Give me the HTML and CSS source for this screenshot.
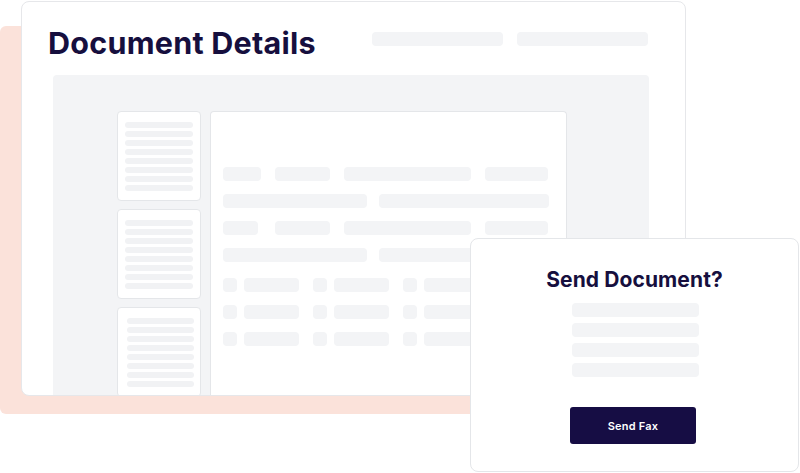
FILE: index.html
```html
<!DOCTYPE html>
<html>
<head>
<meta charset="utf-8">
<link rel="stylesheet" href="styles.css">
</head>
<body>
<div class="stage">
  <div class="backdrop"></div>
  <div class="card">
    <div class="card-head">
      <h1 class="title">Document Details</h1>
      <div class="head-bars">
        <span class="bar head-bar"></span>
        <span class="bar head-bar"></span>
      </div>
    </div>
    <div class="viewer">
      <div class="thumbs">
        <div class="thumb"><i></i><i></i><i></i><i></i><i></i><i></i><i></i><i></i></div>
        <div class="thumb"><i></i><i></i><i></i><i></i><i></i><i></i><i></i><i></i></div>
        <div class="thumb thumb-shift"><i></i><i></i><i></i><i></i><i></i><i></i><i></i><i></i></div>
      </div>
      <div class="page">
        <div class="rows">
          <div class="row"><span class="bar w38"></span><span class="bar w55"></span><span class="bar w127"></span><span class="bar w63"></span></div>
          <div class="row"><span class="bar w144"></span><span class="bar w170"></span></div>
          <div class="row"><span class="bar w35 gap-wide"></span><span class="bar w55"></span><span class="bar w127"></span><span class="bar w63"></span></div>
          <div class="row"><span class="bar w144"></span><span class="bar w170"></span></div>
        </div>
        <div class="fields">
          <div class="field-row">
            <span class="bar sq"></span><span class="bar w55"></span>
            <span class="bar sq"></span><span class="bar w55"></span>
            <span class="bar sq"></span><span class="bar w55"></span>
          </div>
          <div class="field-row">
            <span class="bar sq"></span><span class="bar w55"></span>
            <span class="bar sq"></span><span class="bar w55"></span>
            <span class="bar sq"></span><span class="bar w55"></span>
          </div>
          <div class="field-row">
            <span class="bar sq"></span><span class="bar w55"></span>
            <span class="bar sq"></span><span class="bar w55"></span>
            <span class="bar sq"></span><span class="bar w55"></span>
          </div>
        </div>
      </div>
    </div>
  </div>
  <div class="dialog">
    <h2 class="dialog-title">Send Document?</h2>
    <div class="dialog-lines">
      <span class="bar dline"></span>
      <span class="bar dline"></span>
      <span class="bar dline"></span>
      <span class="bar dline"></span>
    </div>
    <button class="send-btn">Send Fax</button>
  </div>
</div>
</body>
</html>
```

FILE: styles.css
```css
* { box-sizing: border-box; }
html, body { margin: 0; padding: 0; background: #ffffff; }
body { font-family: "Inter", "Lato", "Liberation Sans", sans-serif; }

.stage {
  position: relative;
  width: 800px;
  height: 473px;
  overflow: hidden;
  padding: 1px 0 0 21px;
}

.backdrop {
  position: absolute;
  left: 0;
  top: 26px;
  width: 664px;
  height: 388px;
  background: #fbe2da;
  border-radius: 6px;
}

.card {
  position: relative;
  width: 665px;
  height: 395px;
  background: #ffffff;
  border: 1.5px solid #e6e7ea;
  border-radius: 8px;
  display: flex;
  flex-direction: column;
  overflow: hidden;
}

.card-head {
  height: 73px;
  display: flex;
  align-items: center;
  justify-content: space-between;
  padding: 0 37px 0 26px;
}

.title {
  margin: 8px 0 0 0;
  font-size: 30.5px;
  font-weight: 700;
  letter-spacing: 0.25px;
  color: #160f3e;
}

.head-bars { display: flex; gap: 14px; }

.bar {
  display: block;
  height: 14px;
  background: #f3f4f6;
  border-radius: 4px;
  flex: none;
}

.head-bar { width: 131px; height: 14px; }

.viewer {
  flex: 1;
  margin: 0 36px 0 31px;
  background: #f3f4f6;
  border-radius: 4px 4px 0 0;
  padding: 36px 0 0 64px;
  display: flex;
  gap: 9px;
  overflow: hidden;
}

.thumbs {
  width: 84px;
  display: flex;
  flex-direction: column;
  gap: 8px;
}

.thumb {
  height: 90px;
  flex: none;
  background: #ffffff;
  border: 1.5px solid #e4e6e9;
  border-radius: 4px;
  padding: 10px 7px 0 7px;
  display: flex;
  flex-direction: column;
  gap: 3px;
}

.thumb i {
  display: block;
  height: 6px;
  background: #f1f2f4;
  border-radius: 3px;
}

.thumb-shift { padding-left: 9px; padding-right: 6px; }

.page {
  width: 357px;
  background: #ffffff;
  border: 1.5px solid #e4e6e9;
  border-bottom: none;
  border-radius: 4px 4px 0 0;
  padding: 55px 18px 0 12px;
}

.rows {
  display: flex;
  flex-direction: column;
  gap: 13px;
}

.row {
  display: flex;
  gap: 14px;
}

.row .w144 { margin-right: -2px; }

.gap-wide { margin-right: 3px; }

.w35 { width: 35px; }
.w38 { width: 38px; }
.w55 { width: 55px; }
.w63 { width: 63px; }
.w127 { width: 127px; }
.w144 { width: 144px; }
.w170 { width: 170px; }

.fields {
  margin-top: 16px;
  display: flex;
  flex-direction: column;
  gap: 13px;
}

.field-row { display: flex; }
.field-row .sq { width: 14px; margin-right: 7px; }
.field-row .w55 { margin-right: 14px; }

.dialog {
  position: absolute;
  left: 470px;
  top: 238px;
  width: 329px;
  height: 234px;
  background: #ffffff;
  border: 1.5px solid #e4e6e9;
  border-radius: 8px;
  display: flex;
  flex-direction: column;
  align-items: center;
  padding-top: 28px;
}

.dialog-title {
  margin: 0;
  font-size: 21px;
  font-weight: 700;
  color: #160f3e;
  line-height: 26px;
  letter-spacing: 0.1px;
}

.dialog-lines {
  margin-top: 10px;
  margin-left: 1px;
  display: flex;
  flex-direction: column;
  gap: 6px;
}

.dline { width: 127px; height: 14px; }

.send-btn {
  margin-top: 30px;
  margin-right: 3px;
  width: 126px;
  height: 37px;
  border: none;
  border-radius: 3px;
  background: #160d44;
  color: #ffffff;
  font-family: "Inter", "Lato", "Liberation Sans", sans-serif;
  font-size: 11px;
  font-weight: 600;
  letter-spacing: 0.2px;
  padding: 0;
}
```
